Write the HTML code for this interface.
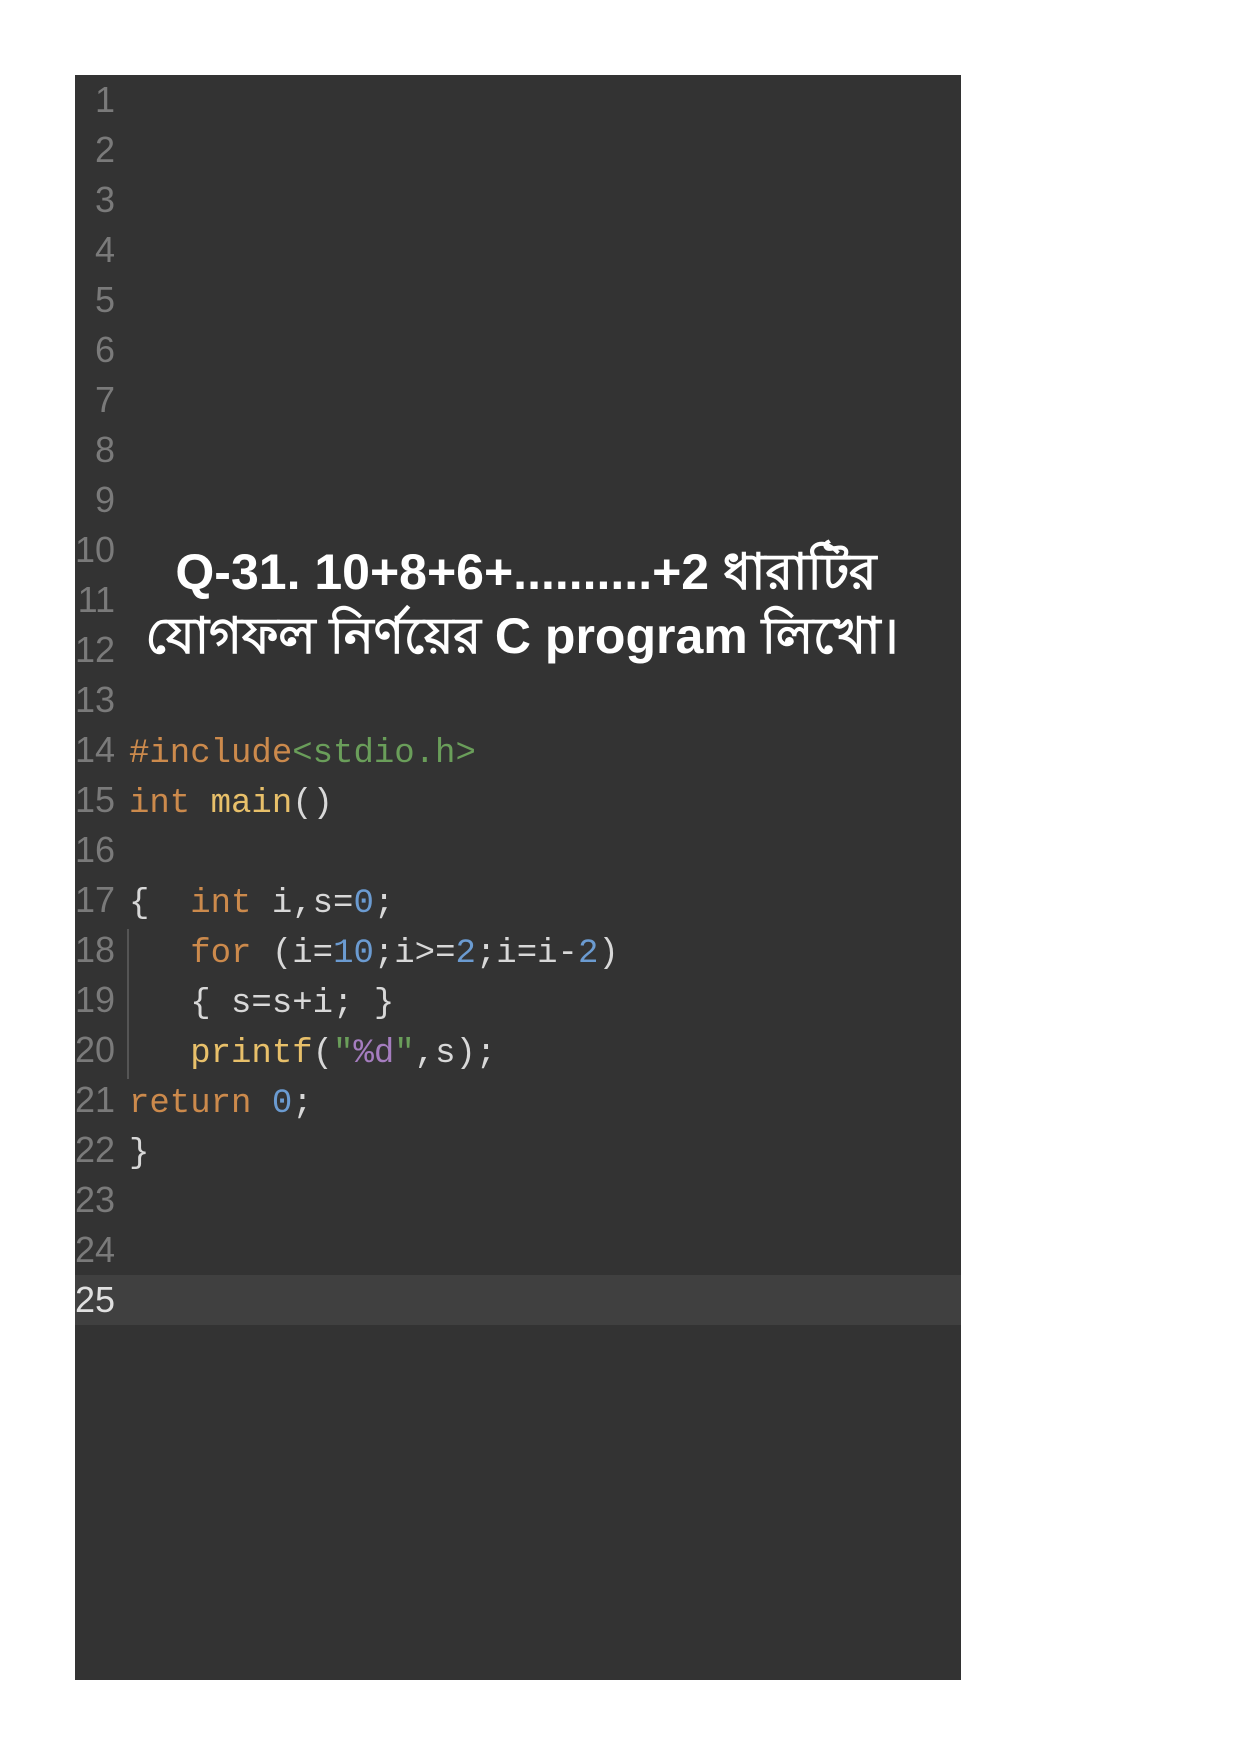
<!DOCTYPE html>
<html><head><meta charset="utf-8"><style>
html,body{margin:0;padding:0;background:#fff;}
body{width:1240px;height:1755px;position:relative;overflow:hidden;}
#p{position:absolute;left:75px;top:75px;width:886px;height:1605px;background:#333333;}
#hl{position:absolute;left:0;top:1200px;width:886px;height:50px;background:#404040;}
.n{position:absolute;left:0;width:40px;text-align:right;font-family:"Liberation Sans Narrow","Liberation Sans","DejaVu Sans",sans-serif;font-size:36px;color:#7a7a7a;line-height:50px;}
.c{position:absolute;left:54px;font-family:"Liberation Mono","DejaVu Sans Mono",monospace;font-size:34px;color:#d8d8d8;line-height:50px;white-space:pre;}
.k{color:#cc8a4c}.f{color:#e8c06a}.g{color:#6a9e5a}.b{color:#6b9bd1}.pu{color:#a57dbf}
#gut{position:absolute;left:52px;top:854px;width:2px;height:150px;background:#555;}
.t{position:absolute;left:0;width:886px;text-align:center;color:#fff;font-family:"Liberation Sans","Noto Sans CJK SC",sans-serif;font-weight:bold;font-size:50px;line-height:60px;white-space:nowrap;}
</style></head><body>
<div id="p">
<div id="hl"></div>
<div class="n" style="top:0">1</div>
<div class="n" style="top:50px">2</div>
<div class="n" style="top:100px">3</div>
<div class="n" style="top:150px">4</div>
<div class="n" style="top:200px">5</div>
<div class="n" style="top:250px">6</div>
<div class="n" style="top:300px">7</div>
<div class="n" style="top:350px">8</div>
<div class="n" style="top:400px">9</div>
<div class="n" style="top:450px">10</div>
<div class="n" style="top:500px">11</div>
<div class="n" style="top:550px">12</div>
<div class="n" style="top:600px">13</div>
<div class="n" style="top:650px">14</div>
<div class="n" style="top:700px">15</div>
<div class="n" style="top:750px">16</div>
<div class="n" style="top:800px">17</div>
<div class="n" style="top:850px">18</div>
<div class="n" style="top:900px">19</div>
<div class="n" style="top:950px">20</div>
<div class="n" style="top:1000px">21</div>
<div class="n" style="top:1050px">22</div>
<div class="n" style="top:1100px">23</div>
<div class="n" style="top:1150px">24</div>
<div class="n" style="top:1200px;color:#e0e0e0">25</div>
<div class="t" style="top:467px;left:8px">Q-31. 10+8+6+..........+2 ধারাটির</div>
<div class="t" style="top:531px;left:4px">যোগফল নির্ণয়ের C program লিখো।</div>
<div id="gut"></div>
<div class="c" style="top:654px"><span class="k">#include</span><span class="g">&lt;stdio.h&gt;</span></div>
<div class="c" style="top:704px"><span class="k">int</span> <span class="f">main</span>()</div>
<div class="c" style="top:804px">{  <span class="k">int</span> i,s=<span class="b">0</span>;</div>
<div class="c" style="top:854px">   <span class="k">for</span> (i=<span class="b">10</span>;i&gt;=<span class="b">2</span>;i=i-<span class="b">2</span>)</div>
<div class="c" style="top:904px">   { s=s+i; }</div>
<div class="c" style="top:954px">   <span class="f">printf</span>(<span class="g">"</span><span class="pu">%d</span><span class="g">"</span>,s);</div>
<div class="c" style="top:1004px"><span class="k">return</span> <span class="b">0</span>;</div>
<div class="c" style="top:1054px">}</div>
</div>
</body></html>
